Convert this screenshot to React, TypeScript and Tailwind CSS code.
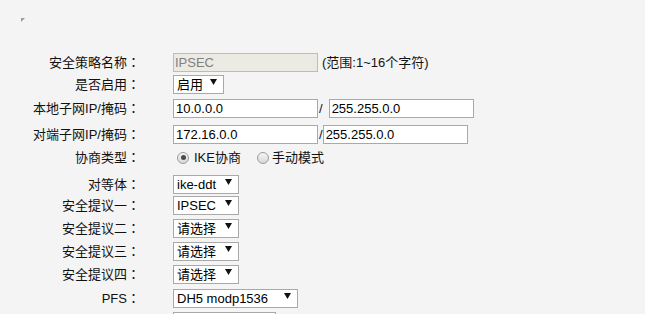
import type { ReactNode } from 'react'

function Row({
  label,
  className,
  children,
}: {
  label: string
  className?: string
  children: ReactNode
}) {
  return (
    <div className={`flex h-[19px] items-center ${className ?? ''}`}>
      <div className="w-[140px] shrink-0 whitespace-nowrap text-right">
        {label}
        {label && <span className="font-['Noto_Sans_CJK_TC',sans-serif]">：</span>}
      </div>
      <div className="ml-[33px] flex items-center whitespace-nowrap">{children}</div>
    </div>
  )
}

function TextBox({ value, disabled }: { value: string; disabled?: boolean }) {
  return (
    <input
      type="text"
      readOnly
      value={value}
      disabled={disabled}
      className={
        disabled
          ? 'h-[19px] w-[145px] border border-[#bdbdb6] bg-[#ebebe4] px-[1px] text-[#808080] outline-none'
          : 'h-[19px] w-[145px] border border-[#a9a9a9] bg-white px-[2px] text-black outline-none'
      }
    />
  )
}

function FakeSelect({ value, width }: { value: string; width: string }) {
  return (
    <div
      className={`flex h-[19px] items-center justify-between border border-[#a9a9a9] bg-white pl-[3px] pr-[6px] text-black ${width}`}
    >
      <span>{value}</span>
      <svg width="7" height="6" viewBox="0 0 7 6" className="mt-[-5px] shrink-0">
        <polygon points="0,0 7,0 3.5,6" fill="#111" />
      </svg>
    </div>
  )
}

function Radio({ checked }: { checked?: boolean }) {
  return (
    <span className="flex h-[12px] w-[12px] items-center justify-center rounded-full border border-[#9c9c9c] bg-gradient-to-b from-[#f4f4f4] to-[#d8d8d8]">
      {checked && <span className="h-[5px] w-[5px] rounded-full bg-[#4a4a4a]" />}
    </span>
  )
}

export default function App() {
  return (
    <div className="min-h-screen bg-[#f4f4f4] font-['Liberation_Sans','Noto_Sans_CJK_SC',sans-serif] text-[13px] text-[#111]">
      {/* broken image placeholder */}
      <div className="h-[53px] pl-[21px] pt-[18px]">
        <svg width="4" height="4" viewBox="0 0 4 4">
          <polygon points="0,0 4,0 0,4" fill="#9a9a9a" />
        </svg>
      </div>

      <div className="flex flex-col">
        <Row label="安全策略名称">
          <TextBox value="IPSEC" disabled />
          <span className="ml-[4px]">(范围:1~16个字符)</span>
        </Row>

        <Row label="是否启用" className="mt-[3px]">
          <FakeSelect value="启用" width="w-[51px]" />
        </Row>

        <Row label="本地子网IP/掩码" className="mt-[5px]">
          <TextBox value="10.0.0.0" />
          <span className="ml-[1px] mr-[6px]">/</span>
          <TextBox value="255.255.0.0" />
        </Row>

        <Row label="对端子网IP/掩码" className="mt-[7px]">
          <TextBox value="172.16.0.0" />
          <span className="ml-[1px]">/</span>
          <TextBox value="255.255.0.0" />
        </Row>

        <Row label="协商类型" className="mt-[4px]">
          <span className="ml-[4px] flex items-center">
            <Radio checked />
            <span className="ml-[5px]">IKE协商</span>
          </span>
          <span className="ml-[16px] flex items-center">
            <Radio />
            <span className="ml-[3px]">手动模式</span>
          </span>
        </Row>

        <Row label="对等体" className="mt-[8px]">
          <FakeSelect value="ike-ddt" width="w-[66px]" />
        </Row>

        <Row label="安全提议一" className="mt-[2px]">
          <FakeSelect value="IPSEC" width="w-[66px]" />
        </Row>

        <Row label="安全提议二" className="mt-[4px]">
          <FakeSelect value="请选择" width="w-[66px]" />
        </Row>

        <Row label="安全提议三" className="mt-[4px]">
          <FakeSelect value="请选择" width="w-[66px]" />
        </Row>

        <Row label="安全提议四" className="mt-[4px]">
          <FakeSelect value="请选择" width="w-[66px]" />
        </Row>

        <Row label="PFS" className="mt-[5px]">
          <FakeSelect value="DH5 modp1536" width="w-[125px]" />
        </Row>

        {/* next row, only its top edge shows */}
        <Row label="" className="mt-[4px]">
          <input
            type="text"
            readOnly
            value=""
            className="h-[19px] w-[103px] border border-[#a9a9a9] bg-white px-[2px] outline-none"
          />
        </Row>
      </div>
    </div>
  )
}
